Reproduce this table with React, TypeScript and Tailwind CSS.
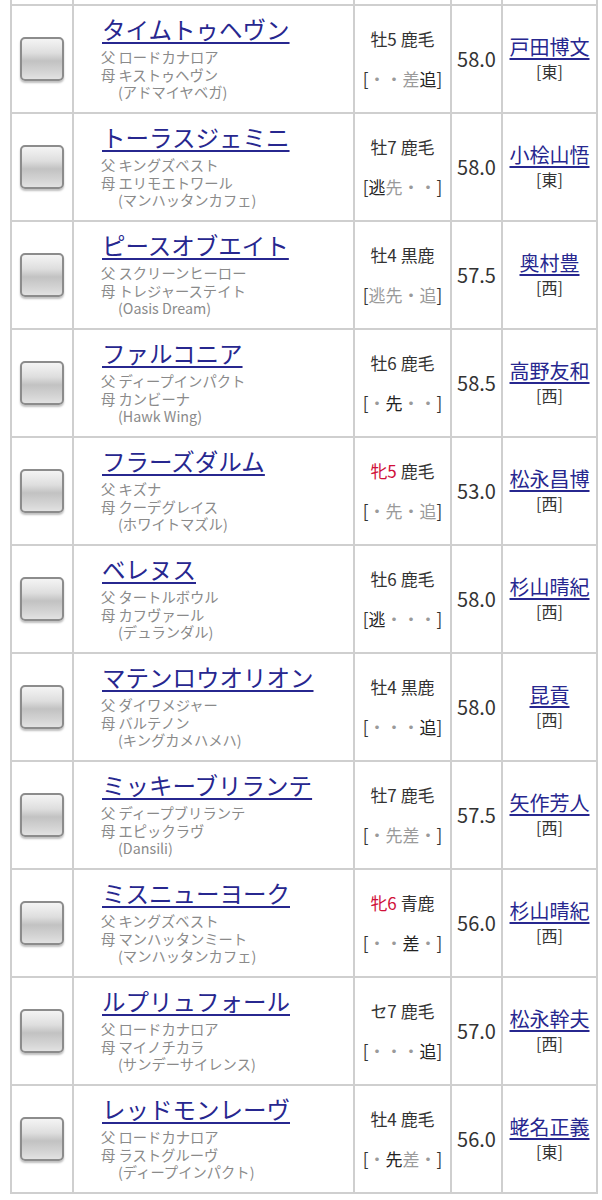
type Horse = {
  name: string;
  sire: string;
  dam: string;
  damSire: string;
  sex: string;
  mare?: boolean;
  coat: string;
  style: string;
  strong: string;
  weight: string;
  jockey: string;
  region: string;
};

// style: 4 slots 逃先差追, strong: "1" = dark, "0" = gray
const horses: Horse[] = [
  { name: "タイムトゥヘヴン", sire: "ロードカナロア", dam: "キストゥヘヴン", damSire: "(アドマイヤベガ)", sex: "牡5", coat: "鹿毛", style: "・・差追", strong: "0001", weight: "58.0", jockey: "戸田博文", region: "[東]" },
  { name: "トーラスジェミニ", sire: "キングズベスト", dam: "エリモエトワール", damSire: "(マンハッタンカフェ)", sex: "牡7", coat: "鹿毛", style: "逃先・・", strong: "1000", weight: "58.0", jockey: "小桧山悟", region: "[東]" },
  { name: "ピースオブエイト", sire: "スクリーンヒーロー", dam: "トレジャーステイト", damSire: "(Oasis Dream)", sex: "牡4", coat: "黒鹿", style: "逃先・追", strong: "0000", weight: "57.5", jockey: "奥村豊", region: "[西]" },
  { name: "ファルコニア", sire: "ディープインパクト", dam: "カンビーナ", damSire: "(Hawk Wing)", sex: "牡6", coat: "鹿毛", style: "・先・・", strong: "0100", weight: "58.5", jockey: "高野友和", region: "[西]" },
  { name: "フラーズダルム", sire: "キズナ", dam: "クーデグレイス", damSire: "(ホワイトマズル)", sex: "牝5", mare: true, coat: "鹿毛", style: "・先・追", strong: "0000", weight: "53.0", jockey: "松永昌博", region: "[西]" },
  { name: "ベレヌス", sire: "タートルボウル", dam: "カフヴァール", damSire: "(デュランダル)", sex: "牡6", coat: "鹿毛", style: "逃・・・", strong: "1000", weight: "58.0", jockey: "杉山晴紀", region: "[西]" },
  { name: "マテンロウオリオン", sire: "ダイワメジャー", dam: "バルテノン", damSire: "(キングカメハメハ)", sex: "牡4", coat: "黒鹿", style: "・・・追", strong: "0001", weight: "58.0", jockey: "昆貢", region: "[西]" },
  { name: "ミッキーブリランテ", sire: "ディープブリランテ", dam: "エピックラヴ", damSire: "(Dansili)", sex: "牡7", coat: "鹿毛", style: "・先差・", strong: "0000", weight: "57.5", jockey: "矢作芳人", region: "[西]" },
  { name: "ミスニューヨーク", sire: "キングズベスト", dam: "マンハッタンミート", damSire: "(マンハッタンカフェ)", sex: "牝6", mare: true, coat: "青鹿", style: "・・差・", strong: "0010", weight: "56.0", jockey: "杉山晴紀", region: "[西]" },
  { name: "ルプリュフォール", sire: "ロードカナロア", dam: "マイノチカラ", damSire: "(サンデーサイレンス)", sex: "セ7", coat: "鹿毛", style: "・・・追", strong: "0001", weight: "57.0", jockey: "松永幹夫", region: "[西]" },
  { name: "レッドモンレーヴ", sire: "ロードカナロア", dam: "ラストグルーヴ", damSire: "(ディープインパクト)", sex: "牡4", coat: "鹿毛", style: "・先差・", strong: "0100", weight: "56.0", jockey: "蛯名正義", region: "[東]" },
];

const font = { fontFamily: '"Noto Sans CJK JP", "Noto Sans", sans-serif' };

function StyleMarks({ style, strong }: { style: string; strong: string }) {
  return (
    <span className="text-[#333]">
      [
      {style.split("").map((ch, i) => (
        <span
          key={i}
          className={
            ch !== "・" && strong[i] === "1" ? "text-[#222]" : "text-[#9a9a9a]"
          }
        >
          {ch}
        </span>
      ))}
      ]
    </span>
  );
}

function Checkbox() {
  return (
    <div className="h-[44px] w-[44px] rounded-[5px] border-2 border-[#8c8c8c] bg-[linear-gradient(to_bottom,#f4f4f4,#dedede_35%,#c2c2c2_55%,#d6d6d6_85%,#e2e2e2)] shadow-[0_2px_2px_rgba(0,0,0,0.25)]" />
  );
}

function HorseRow({ h }: { h: Horse }) {
  return (
    <div className="flex h-[108px] border-b-2 border-[#cfcfcf]">
      <div className="flex w-[62px] items-center justify-center border-r-2 border-[#cfcfcf]">
        <Checkbox />
      </div>
      <div className="w-[281px] border-r-2 border-[#cfcfcf] pl-[27px] pt-[6px]">
        <div className="mb-[2px] pl-px text-[23.5px] leading-[34px] text-[#27278f] underline decoration-[1.5px] underline-offset-[3px]">
          {h.name}
        </div>
        <div className="text-[14.3px] leading-[17.5px] text-[#8a8a8a]">
          <div>父 {h.sire}</div>
          <div>母 {h.dam}</div>
          <div className="pl-[17px]">{h.damSire}</div>
        </div>
      </div>
      <div className="flex w-[97px] flex-col items-center justify-center gap-[16px] border-r-2 border-[#cfcfcf] text-[17px] leading-[24px] text-[#333]">
        <div>
          <span className={h.mare ? "text-[#d0103a]" : ""}>{h.sex}</span> {h.coat}
        </div>
        <StyleMarks style={h.style} strong={h.strong} />
      </div>
      <div className="flex w-[51px] items-center justify-center border-r-2 border-[#cfcfcf] text-[20px] text-[#333]">
        {h.weight}
      </div>
      <div className="flex w-[95px] flex-col items-center justify-center border-r-2 border-[#cfcfcf]">
        <div className="text-[20px] leading-[25px] text-[#27278f] underline decoration-[1.5px] underline-offset-[3px]">
          {h.jockey}
        </div>
        <div className="text-[16px] leading-[25px] text-[#333]">{h.region}</div>
      </div>
    </div>
  );
}

export default function App() {
  return (
    <div className="min-h-[1200px] bg-white" style={font}>
      <div className="ml-[10px] w-[588px] border-l-2 border-[#cfcfcf]">
        <div className="flex h-[6px] border-b-2 border-[#cfcfcf]">
          <div className="w-[62px] border-r-2 border-[#cfcfcf]" />
          <div className="w-[281px] border-r-2 border-[#cfcfcf]" />
          <div className="w-[97px] border-r-2 border-[#cfcfcf]" />
          <div className="w-[51px] border-r-2 border-[#cfcfcf]" />
          <div className="w-[95px] border-r-2 border-[#cfcfcf]" />
        </div>
        {horses.map((h) => (
          <HorseRow key={h.name} h={h} />
        ))}
      </div>
    </div>
  );
}
